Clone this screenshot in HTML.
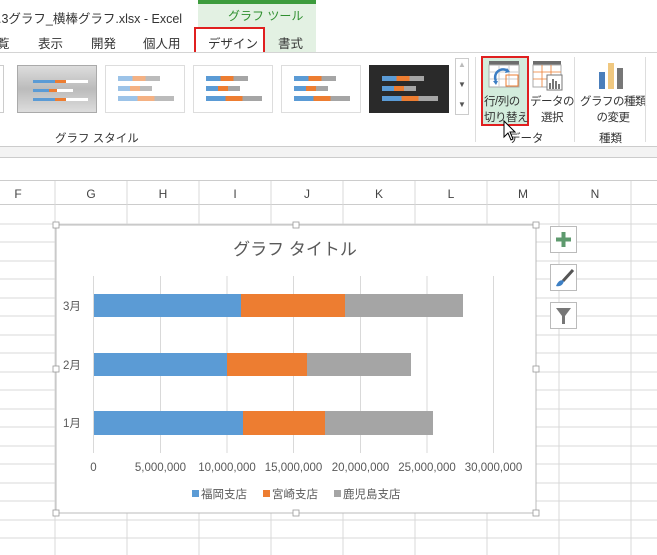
<!DOCTYPE html>
<html><head><meta charset="utf-8"><style>
*{margin:0;padding:0;box-sizing:border-box}
body{width:657px;height:555px;overflow:hidden;background:#fff;position:relative;font-family:"Liberation Sans","Noto Sans CJK JP",sans-serif;color:#444;font-size:12px}
.a{position:absolute}
.t{position:absolute;white-space:nowrap}
</style></head><body>
<div class="a" style="left:0;top:0;width:657px;height:53px;background:#fff"></div>
<div class="a" style="left:198px;top:0;width:118px;height:53px;background:#e3f1e3"></div>
<div class="a" style="left:198px;top:0;width:118px;height:4px;background:#3d9c3d"></div>
<div class="t" style="left:228px;top:7px;font-size:12px;color:#2f8f2f">グラフ ツール</div>
<div class="t" style="left:-2px;top:8px;font-size:12.5px;color:#333">.3グラフ_横棒グラフ.xlsx - Excel</div>
<div class="t" style="left:-3px;top:33px;font-size:12.5px;color:#333">覧</div>
<div class="t" style="left:38px;top:33px;font-size:12.5px;color:#333">表示</div>
<div class="t" style="left:91px;top:33px;font-size:12.5px;color:#333">開発</div>
<div class="t" style="left:143px;top:33px;font-size:12.5px;color:#333">個人用</div>
<div class="a" style="left:194px;top:27px;width:71px;height:27px;background:#fff;border:2px solid #e02020"></div>
<div class="t" style="left:208px;top:33px;font-size:12.5px;color:#333">デザイン</div>
<div class="t" style="left:278px;top:33px;font-size:12.5px;color:#333">書式</div>
<div class="a" style="left:0;top:52px;width:657px;height:1px;background:#d4d4d4"></div>
<div class="a" style="left:0;top:53px;width:657px;height:94px;background:#fff"></div>
<div class="a" style="left:0;top:65px;width:4px;height:48px;border:1px solid #ccc;border-left:none"></div>
<div class="a" style="left:17px;top:65px;width:80px;height:48px;background:linear-gradient(#ddd,#bbb 50%,#ddd);border:1px solid #aaa"></div>
<div class="a" style="left:105px;top:65px;width:80px;height:48px;background:#fff;border:1px solid #ddd"></div>
<div class="a" style="left:193px;top:65px;width:80px;height:48px;background:#fff;border:1px solid #ddd"></div>
<div class="a" style="left:281px;top:65px;width:80px;height:48px;background:#fff;border:1px solid #ddd"></div>
<div class="a" style="left:369px;top:65px;width:80px;height:48px;background:#2a2a2a"></div>
<div class="a" style="left:33px;top:80px;width:55px;height:3px;background:linear-gradient(90deg,#5b9bd5 40%,#ed7d31 40% 60%,#fff 60%)"></div>
<div class="a" style="left:33px;top:89px;width:40px;height:3px;background:linear-gradient(90deg,#5b9bd5 40%,#ed7d31 40% 60%,#fff 60%)"></div>
<div class="a" style="left:33px;top:98px;width:55px;height:3px;background:linear-gradient(90deg,#5b9bd5 40%,#ed7d31 40% 60%,#fff 60%)"></div>
<div class="a" style="left:118px;top:76px;width:42px;height:5px;background:linear-gradient(90deg,#9cc3e8 35%,#f4b183 35% 65%,#bbb 65%)"></div>
<div class="a" style="left:118px;top:86px;width:34px;height:5px;background:linear-gradient(90deg,#9cc3e8 35%,#f4b183 35% 65%,#bbb 65%)"></div>
<div class="a" style="left:118px;top:96px;width:56px;height:5px;background:linear-gradient(90deg,#9cc3e8 35%,#f4b183 35% 65%,#bbb 65%)"></div>
<div class="a" style="left:206px;top:76px;width:42px;height:5px;background:linear-gradient(90deg,#5b9bd5 35%,#ed7d31 35% 65%,#a5a5a5 65%)"></div>
<div class="a" style="left:206px;top:86px;width:34px;height:5px;background:linear-gradient(90deg,#5b9bd5 35%,#ed7d31 35% 65%,#a5a5a5 65%)"></div>
<div class="a" style="left:206px;top:96px;width:56px;height:5px;background:linear-gradient(90deg,#5b9bd5 35%,#ed7d31 35% 65%,#a5a5a5 65%)"></div>
<div class="a" style="left:294px;top:76px;width:42px;height:5px;background:linear-gradient(90deg,#5b9bd5 35%,#ed7d31 35% 65%,#a5a5a5 65%)"></div>
<div class="a" style="left:294px;top:86px;width:34px;height:5px;background:linear-gradient(90deg,#5b9bd5 35%,#ed7d31 35% 65%,#a5a5a5 65%)"></div>
<div class="a" style="left:294px;top:96px;width:56px;height:5px;background:linear-gradient(90deg,#5b9bd5 35%,#ed7d31 35% 65%,#a5a5a5 65%)"></div>
<div class="a" style="left:382px;top:76px;width:42px;height:5px;background:linear-gradient(90deg,#5b9bd5 35%,#ed7d31 35% 65%,#a5a5a5 65%)"></div>
<div class="a" style="left:382px;top:86px;width:34px;height:5px;background:linear-gradient(90deg,#5b9bd5 35%,#ed7d31 35% 65%,#a5a5a5 65%)"></div>
<div class="a" style="left:382px;top:96px;width:56px;height:5px;background:linear-gradient(90deg,#5b9bd5 35%,#ed7d31 35% 65%,#a5a5a5 65%)"></div>
<div class="a" style="left:455px;top:58px;width:14px;height:57px;border:1px solid #ccc"></div>
<div class="t" style="left:458px;top:60px;font-size:8px;color:#bbb">▲</div>
<div class="t" style="left:458px;top:80px;font-size:8px;color:#555">▼</div>
<div class="t" style="left:458px;top:100px;font-size:8px;color:#555">▼</div>
<div class="t" style="left:55px;top:130px;font-size:11.5px;color:#333">グラフ スタイル</div>
<div class="a" style="left:475px;top:57px;width:1px;height:85px;background:#ddd"></div>
<div class="a" style="left:481px;top:56px;width:48px;height:70px;background:#d3ecdc;border:2px solid #e02020"></div>
<svg class="a" style="left:487px;top:59px" width="36" height="34"><rect x="2" y="2" width="30" height="4" fill="#6d6d6d"/><rect x="2" y="6" width="30" height="22" fill="#fff" stroke="#aaa"/><path d="M2 13H32M2 20H32M12 6V28M22 6V28" stroke="#ccc"/><rect x="19" y="16" width="12" height="11" fill="none" stroke="#ed7d31"/><path d="M9 22a8 8 0 0 1 12-10" stroke="#3d7fc4" stroke-width="2.5" fill="none"/><path d="M20 9l3 4-5 1z" fill="#3d7fc4"/><path d="M9 26l-3-4 5 0z" fill="#3d7fc4"/></svg>
<div class="t" style="left:484px;top:94px;font-size:11.5px;color:#333;line-height:16px;letter-spacing:-0.5px">行/列の<br>切り替え</div>
<svg class="a" style="left:531px;top:59px" width="34" height="34"><rect x="2" y="2" width="28" height="4" fill="#6d6d6d"/><rect x="2" y="6" width="28" height="22" fill="#fff" stroke="#aaa"/><path d="M2 13H30M2 20H30M11 6V28M20 6V28" stroke="#ed7d31" stroke-width=".8"/><rect x="16" y="16" width="15" height="15" fill="#fff" stroke="#777"/><path d="M19 30V24M22 30V20M25 30V22M28 30V25" stroke="#777" stroke-width="2"/></svg>
<div class="t" style="left:530px;top:94px;font-size:11.5px;color:#333;line-height:16px;text-align:center;letter-spacing:-0.5px">データの<br>選択</div>
<div class="t" style="left:509px;top:130px;font-size:11.5px;color:#333">データ</div>
<div class="a" style="left:574px;top:57px;width:1px;height:85px;background:#ddd"></div>
<svg class="a" style="left:597px;top:60px" width="30" height="30"><rect x="2" y="12" width="6" height="17" fill="#4a7ebb"/><rect x="11" y="3" width="6" height="26" fill="#f0c880"/><rect x="20" y="8" width="6" height="21" fill="#777"/></svg>
<div class="t" style="left:580px;top:94px;font-size:11.5px;color:#333;line-height:16px;text-align:center;letter-spacing:-0.5px">グラフの種類<br>の変更</div>
<div class="t" style="left:599px;top:130px;font-size:11.5px;color:#333">種類</div>
<div class="a" style="left:645px;top:57px;width:1px;height:85px;background:#ddd"></div>
<svg class="a" style="left:503px;top:120px" width="14" height="22"><path d="M1 1V17L5 13L8 20L10 19L7 12H12Z" fill="#fff" stroke="#000"/></svg>
<div class="a" style="left:0;top:146px;width:657px;height:1px;background:#ccc"></div>
<div class="a" style="left:0;top:147px;width:657px;height:10px;background:#f3f3f3"></div>
<div class="a" style="left:0;top:157px;width:657px;height:1px;background:#ccc"></div>
<div class="a" style="left:0;top:180px;width:657px;height:1px;background:#ccc"></div>
<div class="a" style="left:0;top:181px;width:657px;height:24px;background:#fff;border-bottom:1px solid #ccc"></div>
<svg class="a" style="left:0;top:181px" width="657" height="374">
<g stroke="#d8d8d8">
<path d="M55 0V24M127 0V24M199 0V24M271 0V24M343 0V24M415 0V24M487 0V24M559 0V24M631 0V24"/>
<path d="M55 24V374M127 24V374M199 24V374M271 24V374M343 24V374M415 24V374M487 24V374M559 24V374M631 24V374"/>
<path d="M0 43H657M0 61H657M0 80H657M0 98H657M0 117H657M0 135H657M0 154H657M0 172H657M0 191H657M0 209H657M0 228H657M0 246H657M0 265H657M0 283H657M0 302H657M0 320H657M0 339H657M0 357H657"/>
</g>
<g font-family="Liberation Sans" font-size="12" fill="#444" text-anchor="middle">
<text x="18" y="17">F</text><text x="91" y="17">G</text><text x="163" y="17">H</text><text x="235" y="17">I</text><text x="307" y="17">J</text><text x="379" y="17">K</text><text x="451" y="17">L</text><text x="523" y="17">M</text><text x="595" y="17">N</text>
</g>
</svg>
<svg class="a" style="left:0;top:0" width="657" height="555">
<rect x="56" y="225" width="480" height="288" fill="#fff" stroke="#bbb"/>
<g fill="#fff" stroke="#999" stroke-width=".8">
<rect x="53" y="222" width="6" height="6"/><rect x="293" y="222" width="6" height="6"/><rect x="533" y="222" width="6" height="6"/>
<rect x="53" y="366" width="6" height="6"/><rect x="533" y="366" width="6" height="6"/>
<rect x="53" y="510" width="6" height="6"/><rect x="293" y="510" width="6" height="6"/><rect x="533" y="510" width="6" height="6"/>
</g>
<text x="295" y="255" font-family="Liberation Sans,Noto Sans CJK JP,sans-serif" font-size="17" fill="#595959" text-anchor="middle">グラフ タイトル</text>
<g stroke="#d9d9d9"><path d="M93.5 276V453M160.5 276V453M227 276V453M293.5 276V453M360.5 276V453M427 276V453M493.5 276V453"/></g>
<rect x="94" y="294" width="147" height="23" fill="#5b9bd5"/><rect x="241" y="294" width="104" height="23" fill="#ed7d31"/><rect x="345" y="294" width="118" height="23" fill="#a5a5a5"/>
<rect x="94" y="353" width="133" height="23" fill="#5b9bd5"/><rect x="227" y="353" width="80" height="23" fill="#ed7d31"/><rect x="307" y="353" width="104" height="23" fill="#a5a5a5"/>
<rect x="94" y="411" width="149" height="24" fill="#5b9bd5"/><rect x="243" y="411" width="82" height="24" fill="#ed7d31"/><rect x="325" y="411" width="108" height="24" fill="#a5a5a5"/>
<g font-family="Liberation Sans,Noto Sans CJK JP,sans-serif" font-size="11.5" fill="#595959">
<text x="63" y="310">3月</text><text x="63" y="369">2月</text><text x="63" y="427">1月</text>
<g text-anchor="middle"><text x="93.5" y="471">0</text><text x="160.5" y="471">5,000,000</text><text x="227" y="471">10,000,000</text><text x="293.5" y="471">15,000,000</text><text x="360.5" y="471">20,000,000</text><text x="427" y="471">25,000,000</text><text x="493.5" y="471">30,000,000</text></g>
<rect x="192" y="490" width="7" height="7" fill="#5b9bd5"/><text x="201" y="498">福岡支店</text>
<rect x="263" y="490" width="7" height="7" fill="#ed7d31"/><text x="272" y="498">宮崎支店</text>
<rect x="334" y="490" width="7" height="7" fill="#a5a5a5"/><text x="343" y="498">鹿児島支店</text>
</g>
<g fill="#fff" stroke="#bbb"><rect x="550.5" y="226.5" width="26" height="26"/><rect x="550.5" y="264.5" width="26" height="26"/><rect x="550.5" y="302.5" width="26" height="26"/></g>
<path d="M563.5 232V247M556 239.5H571" stroke="#5e9a6e" stroke-width="4"/>
<path d="M573 270L563 281" stroke="#555" stroke-width="3"/><path d="M556 286c2-5 5-7 8-5-1 4-4 6-8 5z" fill="#3d7fc4"/>
<path d="M556 308H571L565 316V324H562V316Z" fill="#777"/>
</svg>
</body></html>
